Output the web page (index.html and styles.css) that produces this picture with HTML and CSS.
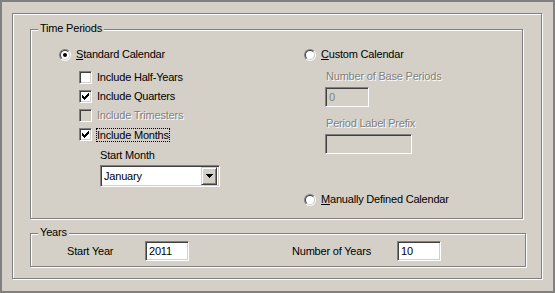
FILE: index.html
```html
<!DOCTYPE html>
<html>
<head>
	<title>Time Periods</title>
	<meta charset="utf-8">
	<link rel="stylesheet" href="styles.css">
</head>
<body>

	<div class="window">
		<div class="frame">

			<div class="group" id="time_periods">
				<span class="legend">Time Periods</span>
				<div class="columns">

					<div class="col col_left">
						<div class="row">
							<span class="radio"><span class="radio_in"><span class="dot"></span></span></span>
							<span class="label"><u>S</u>tandard Calendar</span>
						</div>
						<div class="row check_row first_check">
							<span class="check"></span>
							<span class="label">Include Half-Years</span>
						</div>
						<div class="row check_row">
							<span class="check"><svg width="7" height="7" viewBox="0 0 7 7"><path d="M0 2H1V3H2V4H3V3H4V2H5V1H6V0H7V3H6V4H5V5H4V6H3V7H2V6H1V5H0Z" fill="#000" shape-rendering="crispEdges"/></svg></span>
							<span class="label">Include Quarters</span>
						</div>
						<div class="row check_row">
							<span class="check disabled"></span>
							<span class="label grey">Include Trimesters</span>
						</div>
						<div class="row check_row">
							<span class="check"><svg width="7" height="7" viewBox="0 0 7 7"><path d="M0 2H1V3H2V4H3V3H4V2H5V1H6V0H7V3H6V4H5V5H4V6H3V7H2V6H1V5H0Z" fill="#000" shape-rendering="crispEdges"/></svg></span>
							<span class="label focus">Include Months</span>
						</div>
						<div class="label start_month">Start Month</div>
						<div class="combo">
							<span class="combo_text">January</span>
							<span class="combo_btn"><svg width="7" height="4" viewBox="0 0 7 4"><path d="M0 0H7V1H6V2H5V3H4V4H3V3H2V2H1V1H0Z" fill="#000" shape-rendering="crispEdges"/></svg></span>
						</div>
					</div>

					<div class="col col_right">
						<div class="row">
							<span class="radio"><span class="radio_in"></span></span>
							<span class="label"><u>C</u>ustom Calendar</span>
						</div>
						<div class="label grey sub_label first_sub">Number of Base Periods</div>
						<div class="textbox disabled base_periods">0</div>
						<div class="label grey sub_label">Period Label Prefix</div>
						<div class="textbox disabled prefix"></div>
						<div class="row manual_row">
							<span class="radio"><span class="radio_in"></span></span>
							<span class="label"><u>M</u>anually Defined Calendar</span>
						</div>
					</div>

				</div>
			</div>

			<div class="group" id="years">
				<span class="legend">Years</span>
				<div class="years_row">
					<span class="label start_year">Start Year</span>
					<div class="textbox year_box">2011</div>
					<span class="label num_years">Number of Years</span>
					<div class="textbox year_box">10</div>
				</div>
			</div>

		</div>
	</div>

</body>
</html>
```

FILE: styles.css
```css
* {
	margin: 0px;
	box-sizing: border-box;
}
body {
	background-color: #d4d0c8;
	font-family: "Liberation Sans", Arial, sans-serif;
	font-size: 11px;
	letter-spacing: -0.2px;
	color: #000;
}
.window {
	width: 555px;
	height: 293px;
	border: 2px solid #808080;
	padding: 11px 0px 0px 10px;
}
.frame {
	width: 530px;
	height: 266px;
	border: 1px solid #808080;
	box-shadow: inset 1px 1px #fff, 1px 1px #fff;
	padding: 15px 0px 0px 17px;
}
.group {
	position: relative;
	border: 1px solid #808080;
	box-shadow: inset 1px 1px #fff, 1px 1px #fff;
}
.legend {
	position: absolute;
	top: -8px;
	left: 7px;
	padding: 0px 2px;
	line-height: 13px;
	background-color: #d4d0c8;
}
#time_periods {
	width: 493px;
	height: 190px;
}
#years {
	width: 496px;
	height: 34px;
	margin-top: 14px;
}
.columns {
	display: flex;
	padding: 18px 0px 0px 28px;
}
.col_left {
	width: 245px;
}
.row {
	display: flex;
	align-items: center;
	height: 13px;
	line-height: 13px;
}
.label {
	line-height: 13px;
	white-space: nowrap;
}
.grey {
	color: #808080;
	text-shadow: 1px 1px 0px #fff;
}
.radio {
	width: 12px;
	height: 12px;
	border-radius: 50%;
	border: 1px solid;
	border-color: #808080 #fff #fff #808080;
	margin-right: 5px;
}
.radio_in {
	display: flex;
	align-items: center;
	justify-content: center;
	width: 10px;
	height: 10px;
	border-radius: 50%;
	border: 1px solid;
	border-color: #404040 #d4d0c8 #d4d0c8 #404040;
	background-color: #fff;
}
.dot {
	width: 4px;
	height: 4px;
	border-radius: 50%;
	background-color: #000;
}
.check_row {
	margin-top: 6px;
	padding-left: 20px;
}
.first_check {
	margin-top: 10px;
}
.check {
	display: flex;
	align-items: center;
	justify-content: center;
	width: 13px;
	height: 13px;
	border: 1px solid;
	border-color: #808080 #fff #fff #808080;
	box-shadow: inset 1px 1px #404040, inset -1px -1px #d4d0c8;
	background-color: #fff;
	margin-right: 5px;
}
.check.disabled {
	background-color: #d4d0c8;
}
.focus {
	border: 1px dotted #000;
	margin-left: -1px;
	line-height: 12px;
}
.start_month {
	margin-top: 8px;
	padding-left: 41px;
}
.combo {
	display: flex;
	align-items: center;
	justify-content: space-between;
	width: 120px;
	height: 22px;
	margin: 3px 0px 0px 41px;
	border: 1px solid;
	border-color: #808080 #fff #fff #808080;
	box-shadow: inset 1px 1px #404040, inset -1px -1px #d4d0c8;
	background-color: #fff;
	padding: 2px 2px 2px 3px;
}
.combo_btn {
	display: flex;
	align-items: center;
	justify-content: center;
	width: 16px;
	height: 18px;
	background-color: #d4d0c8;
	border: 1px solid;
	border-color: #d4d0c8 #404040 #404040 #d4d0c8;
	box-shadow: inset 1px 1px #fff, inset -1px -1px #808080;
}
.col_right {
	padding-left: 0px;
}
.sub_label {
	margin-left: 22px;
	margin-top: 10px;
}
.first_sub {
	margin-top: 9px;
}
.textbox {
	height: 20px;
	border: 1px solid;
	border-color: #808080 #fff #fff #808080;
	box-shadow: inset 1px 1px #404040, inset -1px -1px #d4d0c8;
	background-color: #fff;
	padding: 3px 0px 0px 3px;
	line-height: 13px;
}
.textbox.disabled {
	background-color: #d4d0c8;
	color: #808080;
	margin-left: 21px;
	margin-top: 4px;
}
.base_periods {
	width: 44px;
}
.prefix {
	width: 87px;
}
.manual_row {
	margin-top: 39px;
}
.years_row {
	display: flex;
	align-items: center;
	padding: 7px 0px 0px 36px;
}
.start_year {
	width: 78px;
}
.year_box {
	width: 44px;
}
.num_years {
	width: 105px;
	margin-left: 103px;
}
```
